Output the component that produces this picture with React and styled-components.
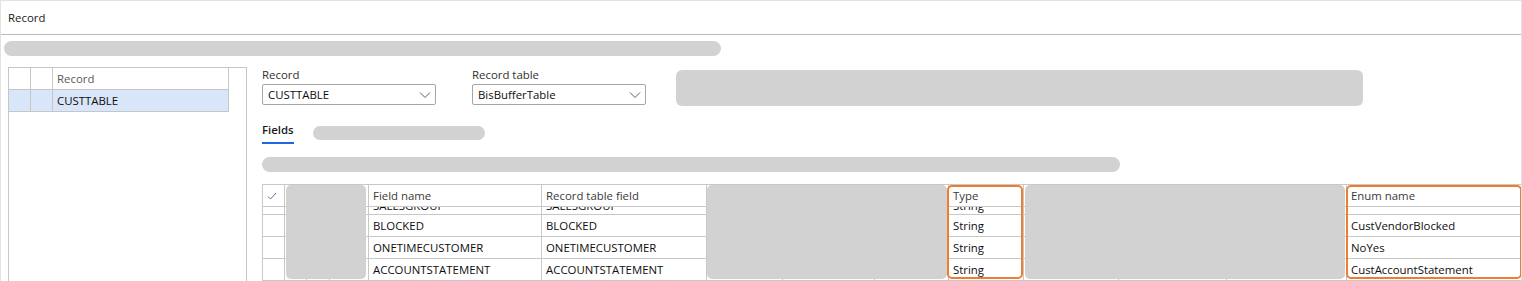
import React from 'react'
import styled, { createGlobalStyle } from 'styled-components'

const GlobalStyle = createGlobalStyle`
    html, body {
        margin: 0;
        padding: 0;
        background: #ffffff;
    }
    body {
        font-family: "Open Sans", "Noto Sans", sans-serif;
        font-size: 11.4px;
        color: #1b1a19;
    }
`

const Frame = styled.div`
    width: 1522px;
    height: 281px;
    box-sizing: border-box;
    border: 1px solid #e3e3e3;
    border-bottom: none;
    overflow: hidden;
`

const Header = styled.div`
    height: 33px;
    border-bottom: 1px solid #bcbcbc;
    display: flex;
    align-items: center;
    padding-left: 7px;
    color: #1b1a19;
`

const Skeleton = styled.div`
    background: #d2d2d2;
    border-radius: ${p => p.$radius || 8}px;
    width: ${p => p.$w}px;
    height: ${p => p.$h}px;
    flex-shrink: 0;
`

const TopBar = styled(Skeleton)`
    margin: 6px 0 0 3px;
`

const Body = styled.div`
    display: flex;
    margin-top: 11px;
    padding-left: 7px;
`

const LeftBox = styled.div`
    width: 237px;
    height: 220px;
    border: 1px solid #c6c6c6;
    border-bottom: none;
    flex-shrink: 0;
`

const ListGrid = styled.div`
    display: grid;
    grid-template-columns: 22px 22px 176px;
    width: 220px;
`

const ListCell = styled.div`
    height: 21px;
    border-right: 1px solid #c6c6c6;
    border-bottom: 1px solid #c6c6c6;
    background: ${p => (p.$selected ? '#d9e5f8' : 'transparent')};
    color: ${p => (p.$head ? '#5a5856' : '#0e0e0e')};
    line-height: 21px;
    padding-left: 4px;
    white-space: nowrap;
    overflow: hidden;
`

const Main = styled.div`
    margin-left: 15px;
    flex: 1;
    display: flex;
    flex-direction: column;
`

const FormRow = styled.div`
    display: flex;
    align-items: flex-start;
`

const Field = styled.div`
    width: 174px;
    margin-right: 36px;
    display: flex;
    flex-direction: column;
`

const Label = styled.label`
    line-height: 16px;
    color: #323130;
`

const Select = styled.div`
    margin-top: 1px;
    height: 19px;
    border: 1px solid #a6a6a6;
    border-radius: 2px;
    display: flex;
    align-items: center;
    justify-content: space-between;
    padding: 0 4px 0 5px;
    color: #0e0e0e;
`

const WideBlock = styled(Skeleton)`
    margin: 3px 0 0 -6px;
`

const TabRow = styled.div`
    display: flex;
    align-items: flex-start;
    margin-top: 16px;
`

const Tab = styled.div`
    font-weight: 600;
    line-height: 16px;
    padding-bottom: 4px;
    border-bottom: 2px solid #2266e3;
    color: #1b1a19;
    margin-right: 19px;
`

const TabPill = styled(Skeleton)`
    margin-top: 4px;
`

const FilterBar = styled(Skeleton)`
    margin-top: 13px;
`

const GridWrap = styled.div`
    position: relative;
    margin-top: 12px;
    width: 1260px;
`

const Grid = styled.div`
    display: grid;
    grid-template-columns: 22px 22px 23px 39px 173px 165px 76px 92px 74px 75px 95px 108px 120px 1fr;
    border-top: 1px solid #c8c8c8;
    border-left: 1px solid #c8c8c8;
`

const Cell = styled.div`
    height: ${p => p.$h || 21}px;
    line-height: ${p => p.$h || 21}px;
    border-right: 1px solid #c8c8c8;
    border-bottom: 1px solid #c8c8c8;
    padding-left: 4px;
    white-space: nowrap;
    overflow: hidden;
    color: ${p => (p.$head ? '#3b3a39' : '#0e0e0e')};
`

const ClippedText = styled.span`
    display: block;
    line-height: 21px;
    margin-top: -12px;
`

const Cover = styled.div`
    position: absolute;
    top: 1px;
    left: ${p => p.$x}px;
    width: ${p => p.$w}px;
    height: 94px;
    background: #d2d2d2;
    border-radius: 5px;
`

const Highlight = styled.div`
    position: absolute;
    top: 1px;
    left: ${p => p.$x}px;
    width: ${p => p.$w}px;
    height: 94px;
    box-sizing: border-box;
    border: 2px solid #ed7d31;
    border-radius: 5px;
`

const Chevron = () => (
    <svg width="12" height="8" viewBox="0 0 12 8">
        <path d="M1 1.5 L6 6.5 L11 1.5" fill="none" stroke="#605e5c" strokeWidth="1" />
    </svg>
)

const Check = () => (
    <svg width="10" height="8" viewBox="0 0 10 8">
        <path d="M1 4.5 L3.5 7 L9 1" fill="none" stroke="#6b6aa8" strokeWidth="1" />
    </svg>
)

const columns = ['', '', '', '', 'Field name', 'Record table field', '', '', '', 'Type', '', '', '', 'Enum name']

const rows = [
    ['BLOCKED', 'BLOCKED', 'String', 'CustVendorBlocked'],
    ['ONETIMECUSTOMER', 'ONETIMECUSTOMER', 'String', 'NoYes'],
    ['ACCOUNTSTATEMENT', 'ACCOUNTSTATEMENT', 'String', 'CustAccountStatement'],
]

function toCells(r) {
    return ['', '', '', '', r[0], r[1], '', '', '', r[2], '', '', '', r[3]]
}

export default function App() {
    return (
        <>
            <GlobalStyle />
            <Frame>
                <Header>Record</Header>
                <TopBar $w={717} $h={15} />
                <Body>
                    <LeftBox>
                        <ListGrid>
                            <ListCell $head />
                            <ListCell $head />
                            <ListCell $head>Record</ListCell>
                            <ListCell $selected />
                            <ListCell $selected />
                            <ListCell $selected>CUSTTABLE</ListCell>
                        </ListGrid>
                    </LeftBox>
                    <Main>
                        <FormRow>
                            <Field>
                                <Label>Record</Label>
                                <Select>CUSTTABLE<Chevron /></Select>
                            </Field>
                            <Field>
                                <Label>Record table</Label>
                                <Select>BisBufferTable<Chevron /></Select>
                            </Field>
                            <WideBlock $w={687} $h={36} $radius={6} />
                        </FormRow>
                        <TabRow>
                            <Tab>Fields</Tab>
                            <TabPill $w={172} $h={14} $radius={7} />
                        </TabRow>
                        <FilterBar $w={858} $h={15} />
                        <GridWrap>
                            <Grid>
                                {columns.map((c, i) => (
                                    <Cell key={'h' + i} $head>
                                        {i === 0 ? <Check /> : c}
                                    </Cell>
                                ))}
                                {toCells(['SALESGROUP', 'SALESGROUP', 'String', '']).map((c, i) => (
                                    <Cell key={'p' + i} $h={7}>
                                        <ClippedText>{c}</ClippedText>
                                    </Cell>
                                ))}
                                {rows.map((r, ri) =>
                                    toCells(r).map((c, i) => <Cell key={ri + '-' + i}>{c}</Cell>)
                                )}
                            </Grid>
                            <Cover $x={24} $w={80} />
                            <Cover $x={445} $w={240} />
                            <Cover $x={763} $w={320} />
                            <Highlight $x={685} $w={76} />
                            <Highlight $x={1084} $w={176} />
                        </GridWrap>
                    </Main>
                </Body>
            </Frame>
        </>
    )
}
